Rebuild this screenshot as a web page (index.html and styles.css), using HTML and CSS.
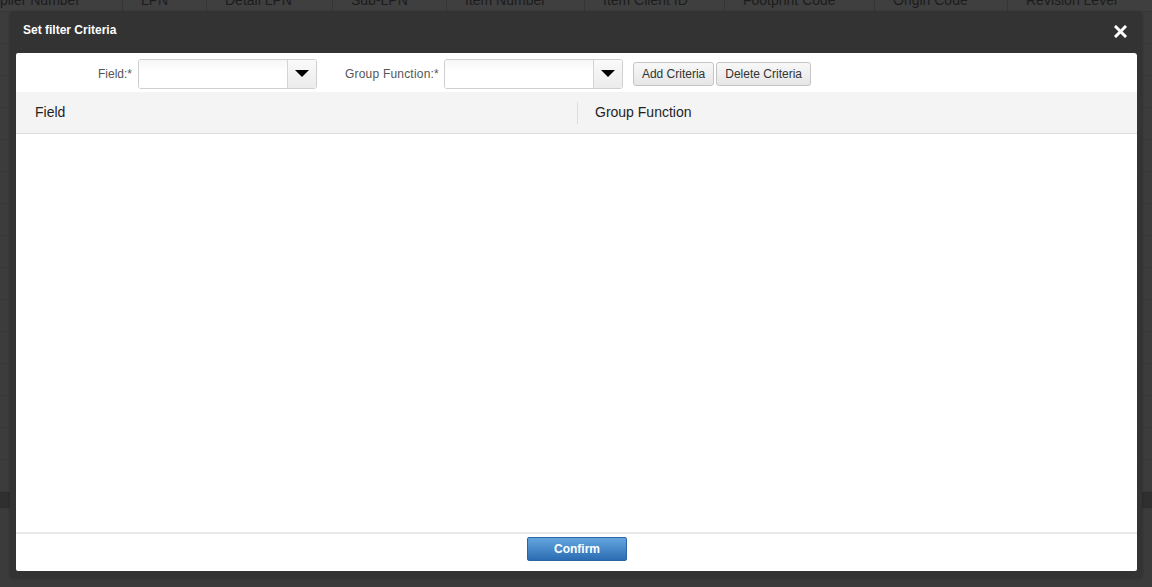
FILE: index.html
```html
<!DOCTYPE html>
<html>
<head>
<meta charset="utf-8">
<link rel="stylesheet" href="styles.css">
</head>
<body>
<div class="bg-grid">
  <div class="bg-head">
    <div class="bg-col c1">Supplier Number</div>
    <div class="bg-col c2">LPN</div>
    <div class="bg-col c3">Detail LPN</div>
    <div class="bg-col c4">Sub-LPN</div>
    <div class="bg-col c5">Item Number</div>
    <div class="bg-col c6">Item Client ID</div>
    <div class="bg-col c7">Footprint Code</div>
    <div class="bg-col c8">Origin Code</div>
    <div class="bg-col c9">Revision Level</div>
  </div>
  <div class="bg-rows">
    <div class="bg-row"></div><div class="bg-row"></div><div class="bg-row"></div>
    <div class="bg-row"></div><div class="bg-row"></div><div class="bg-row"></div>
    <div class="bg-row"></div><div class="bg-row"></div><div class="bg-row"></div>
    <div class="bg-row"></div><div class="bg-row"></div><div class="bg-row"></div>
    <div class="bg-row"></div><div class="bg-row"></div><div class="bg-row"></div>
    <div class="bg-row dark"></div>
  </div>
</div>

<div class="dialog">
  <div class="dialog-head">
    <span class="dialog-title">Set filter Criteria</span>
    <span class="dialog-close" aria-label="close">
      <svg width="13" height="13" viewBox="0 0 13 13"><path d="M2 2 L11 11 M11 2 L2 11" stroke="#fff" stroke-width="3" stroke-linecap="square"/></svg>
    </span>
  </div>
  <div class="dialog-body">
    <div class="toolbar">
      <label class="lbl lbl-field">Field:*</label>
      <div class="combo">
        <div class="combo-input"></div>
        <div class="combo-btn"><span class="tri"></span></div>
      </div>
      <label class="lbl lbl-group">Group Function:*</label>
      <div class="combo">
        <div class="combo-input"></div>
        <div class="combo-btn"><span class="tri"></span></div>
      </div>
      <button class="btn btn-add">Add Criteria</button>
      <button class="btn">Delete Criteria</button>
    </div>
    <div class="grid-head">
      <div class="gh-col gh-field">Field</div>
      <div class="gh-sep"></div>
      <div class="gh-col gh-group">Group Function</div>
    </div>
    <div class="grid-body"></div>
    <div class="footer">
      <button class="btn-primary">Confirm</button>
    </div>
  </div>
</div>
</body>
</html>
```

FILE: styles.css
```css
* { box-sizing: border-box; }
html, body {
  margin: 0;
  padding: 0;
  width: 1152px;
  height: 587px;
  overflow: hidden;
  background: #3b3b3b;
  font-family: "Liberation Sans", Arial, sans-serif;
}

.bg-grid {
  position: absolute;
  left: 0;
  top: 0;
  width: 1152px;
  height: 587px;
}
.bg-head {
  display: flex;
  margin-top: -12px;
  margin-left: -43px;
  height: 24px;
  background: #3f3f3f;
  border-bottom: 1px solid #383838;
}
.bg-col {
  padding-left: 18px;
  line-height: 24px;
  font-size: 14px;
  color: #1c1c1c;
  border-right: 1px solid #353535;
  white-space: nowrap;
  flex: none;
}
.c1 { width: 166px; }
.c2 { width: 84px; }
.c3 { width: 126px; }
.c4 { width: 114px; }
.c5 { width: 138px; }
.c6 { width: 140px; }
.c7 { width: 150px; }
.c8 { width: 133px; }
.c9 { width: 200px; border-right: none; }

.bg-rows { display: flex; flex-direction: column; }
.bg-row {
  height: 32px;
  border-bottom: 1px solid #383838;
  background: #3c3c3c;
}
.bg-row.dark { background: #2f2f2f; height: 17px; }

.dialog {
  position: absolute;
  left: 10px;
  top: 12px;
  width: 1132px;
  height: 566px;
  background: #333333;
  border-radius: 4px;
  padding: 0 5px 7px 6px;
  display: flex;
  flex-direction: column;
  box-shadow: 0 0 3px rgba(0,0,0,0.3);
}
.dialog-head {
  height: 41px;
  flex: none;
  display: flex;
  align-items: center;
  justify-content: space-between;
  padding: 0 10px 0 7px;
}
.dialog-title {
  color: #ffffff;
  font-size: 12px;
  font-weight: bold;
  margin-top: -6px;
}
.dialog-close {
  display: flex;
  margin-top: -2px;
}

.dialog-body {
  flex: 1;
  background: #ffffff;
  border-radius: 2px 3px 2px 2px;
  display: flex;
  flex-direction: column;
  overflow: hidden;
}

.toolbar {
  height: 39px;
  flex: none;
  display: flex;
  align-items: center;
  padding-top: 2px;
}
.lbl {
  font-size: 12px;
  color: #555555;
  text-align: right;
  white-space: nowrap;
}
.lbl-field { width: 116px; margin-right: 6px; }
.lbl-group { margin-left: 28px; margin-right: 5px; letter-spacing: 0.2px; }

.combo {
  display: flex;
  width: 179px;
  height: 30px;
  border: 1px solid #cfcfcf;
  border-radius: 3px;
  overflow: hidden;
}
.combo-input {
  flex: 1;
  background: linear-gradient(#f6f6f6, #ffffff 40%);
}
.combo-btn {
  width: 29px;
  border-left: 1px solid #d4d4d4;
  background: linear-gradient(#fafafa, #ececec);
  display: flex;
  align-items: center;
  justify-content: center;
}
.tri {
  width: 0;
  height: 0;
  border-left: 7px solid transparent;
  border-right: 7px solid transparent;
  border-top: 7px solid #000000;
}

.btn {
  height: 24px;
  padding: 0 8px;
  font-family: "Liberation Sans", Arial, sans-serif;
  font-size: 12px;
  color: #333333;
  background: linear-gradient(#f8f8f8, #e6e6e6);
  border: 1px solid #c4c4c4;
  border-radius: 3px;
  margin-right: 2px;
  margin-top: 1px;
}
.btn-add { margin-left: 10px; }

.grid-head {
  height: 42px;
  flex: none;
  background: #f4f4f4;
  border-bottom: 1px solid #dcdcdc;
  display: flex;
  align-items: center;
}
.gh-col {
  font-size: 14px;
  color: #1f1f1f;
  margin-top: -2px;
}
.gh-field { width: 561px; padding-left: 19px; }
.gh-sep {
  width: 1px;
  height: 22px;
  background: #dedede;
}
.gh-group { padding-left: 17px; }

.grid-body {
  flex: 1;
  background: #ffffff;
}

.footer {
  height: 39px;
  flex: none;
  border-top: 2px solid #e8e8e8;
  display: flex;
  justify-content: center;
  padding-top: 3px;
}
.btn-primary {
  width: 100px;
  height: 24px;
  margin-left: 1px;
  font-family: "Liberation Sans", Arial, sans-serif;
  font-size: 12px;
  font-weight: bold;
  color: #ffffff;
  background: linear-gradient(#64a5de, #2b6db3);
  border: 1px solid #2a65a5;
  border-radius: 2px;
}
```
